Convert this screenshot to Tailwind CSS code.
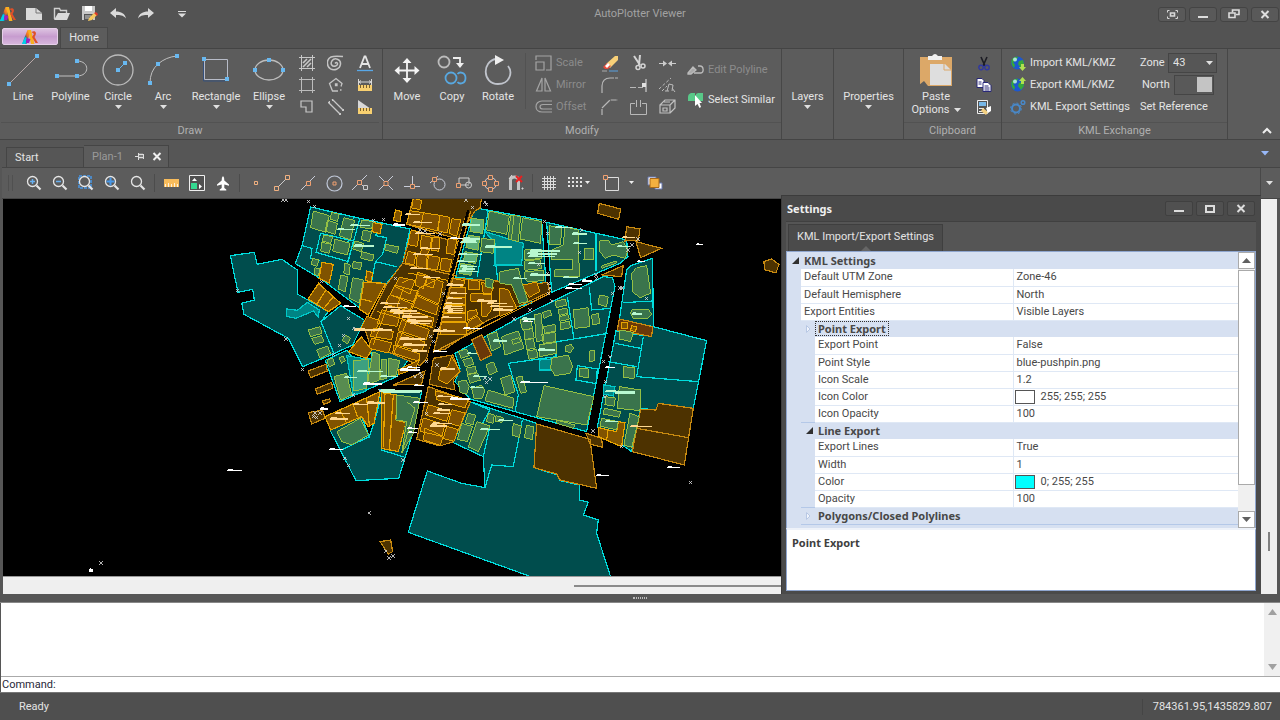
<!DOCTYPE html>
<html lang="en">
<head>
  <meta charset="UTF-8">
  <meta name="viewport" content="width=device-width, initial-scale=1.0">
  <title>AutoPlotter Viewer</title>
  <script src="https://cdn.jsdelivr.net/npm/@tailwindcss/browser@4"></script>
</head>
<body class="bg-[#565656] text-[#e4e4e4] text-[11px] leading-4 font-['Roboto','Noto_Sans',sans-serif]">

<!-- shared shapes -->
<svg width="0" height="0" class="absolute">
  <defs>
    <linearGradient id="lg" x1="0" y1="1" x2="1" y2="0">
      <stop offset="0" stop-color="#00d8f0"/><stop offset=".4" stop-color="#1a5a90"/><stop offset=".6" stop-color="#f07020"/><stop offset="1" stop-color="#ffc030"/>
    </linearGradient>
    <symbol id="logo" viewBox="0 0 16 16">
      <path d="M0 15L5.500 1H9L4.500 15Z" fill="url(#lg)"/>
      <path d="M0 15L3 8l2 1-1.500 6Z" fill="#00d0e8"/>
      <path d="M6 1h3L12.500 15H9Z" fill="#f8b020"/>
      <path d="M9.500 3c4-2 6 1 3 5L16 14h-2.500L10 8l2-3Z" fill="#e05028"/>
      <path d="M4.500 9l4 1-1.500 4H4Z" fill="#a020c0"/>
    </symbol>
    <symbol id="down" viewBox="0 0 7 4"><path d="M0 0h7L3.500 4Z" fill="#e0e0e0"/></symbol>
    <symbol id="lens" viewBox="0 0 18 18">
      <circle cx="7.500" cy="7.500" r="5" fill="none" stroke="#e6e6e6" stroke-width="1.300"/><path d="M11.500 11.500l4 4" stroke="#e6e6e6" stroke-width="2.200"/>
    </symbol>
    <symbol id="globe" viewBox="0 0 16 16">
      <circle cx="7.500" cy="8" r="6.500" fill="#1c58d0"/><path d="M2 4q3-3 6-2l-2 4-3 1 2 3 -1 3Q0 9 2 4M9 6l4-1 1 4-3 4-3-4Z" fill="#38a838"/><circle cx="5" cy="4.500" r="2" fill="#c8f0ff" opacity=".8"/>
    </symbol>
  </defs>
</svg>

<div class="flex flex-col h-screen min-h-[600px] overflow-hidden">

  <!-- title bar -->
  <header class="flex items-center h-7 shrink-0 bg-[#535353] relative">
    <svg class="w-4 h-5 ml-0"><use href="#logo" width="16" height="20"/></svg>
    <div class="flex ml-1 [&>button]:w-7 [&>button]:h-6 [&>button]:grid [&>button]:place-items-center">
      <button aria-label="New"><svg width="18" height="16"><path d="M1 2h10l6 5v7H1Z" fill="#dadada"/><path d="M11 2v5h6" fill="none" stroke="#777"/></svg></button>
      <button aria-label="Open"><svg width="18" height="16"><path d="M1.500 13V2.500h5l1 2h6v3" fill="none" stroke="#d0d0d0" stroke-width="1.400"/><path d="M1 14l4-7h12l-3 7Z" fill="#dadada"/></svg></button>
      <button aria-label="Save"><svg width="18" height="18"><path d="M1 1h13v14H1Z" fill="#c8c8c8"/><path d="M4 1h7v5H4Z" fill="#fff"/><path d="M3 9h9v6H3Z" fill="#555"/><path d="M4 11h6M4 13h4" stroke="#ccc"/><path d="M8 13l5-5 3 2-5 5-4 1Z" fill="#f5c860"/><path d="M13 8l2-1 2 2-1 2Z" fill="#e03a28"/></svg></button>
      <button aria-label="Undo"><svg width="18" height="14"><path d="M1 6l6-5v3.500c5 0 9 2 10 7-3-3.500-6-3.500-10-3.500V11Z" fill="#dadada"/></svg></button>
      <button aria-label="Redo"><svg width="18" height="14"><path d="M17 6l-6-5v3.500c-5 0-9 2-10 7 3-3.500 6-3.500 10-3.500V11Z" fill="#dadada"/></svg></button>
    </div>
    <button aria-label="Customize" class="ml-[10px] w-6 grid place-items-center"><svg width="8" height="7"><path d="M0 .5h8" stroke="#ddd"/><path d="M0 2.500h8L4 6.500Z" fill="#ddd"/></svg></button>
    <h1 class="absolute inset-x-0 text-center pointer-events-none text-[#a2a2a2]">AutoPlotter Viewer</h1>
    <div class="ml-auto mr-px flex gap-[3px] [&>button]:w-7 [&>button]:h-[15px] [&>button]:rounded-[3px] [&>button]:border [&>button]:border-[#444] [&>button]:bg-[#595959] [&>button]:grid [&>button]:place-items-center">
      <button aria-label="Full screen"><svg width="11" height="9" fill="none" stroke="#d8d8d8"><path d="M.5 2.500v-2h2M8.500 .5h2v2M10.500 6.500v2h-2M2.500 8.500h-2v-2"/><path d="M3.500 3h4v3h-4Z" stroke-width="1.600"/></svg></button>
      <button aria-label="Minimize"><svg width="10" height="9"><path d="M0 7h10" stroke="#ddd" stroke-width="2"/></svg></button>
      <button aria-label="Restore"><svg width="12" height="10" fill="none" stroke="#ddd" stroke-width="1.600"><path d="M4.500 3.500V1H11v4.500H8"/><path d="M1 4h6v4.500H1Z"/></svg></button>
      <button aria-label="Close"><svg width="10" height="9"><path d="M1.500 1l7 7M8.500 1l-7 7" stroke="#ddd" stroke-width="2"/></svg></button>
    </div>
  </header>

  <!-- ribbon tabs -->
  <nav class="flex items-end h-5 shrink-0 bg-[#535353]">
    <button aria-label="Application menu" class="ml-[2px] mb-[3px] w-14 h-[17px] rounded-[2px] border border-[#e6cfe9] bg-linear-to-b from-[#dcc2e0] via-[#c79ccf] to-[#d6b6dc] grid place-items-center"><svg width="18" height="16"><use href="#logo" width="18" height="16"/></svg></button>
    <button class="ml-[2px] h-[21px] w-12 z-10 bg-[#5c5c5c] border border-b-0 border-[#484848]">Home</button>
  </nav>

  <!-- ribbon -->
  <section class="flex shrink-0 bg-[#5c5c5c] border-y border-[#444] [&>div]:border-r [&>div]:border-[#474747] [&>div]:shrink-0 [&_h2]:text-center [&_h2]:text-[#b0b0b0] [&_h2]:border-t [&_h2]:border-[#525252]">
    <div class="flex flex-col pl-px pr-[3px]">
      <div class="flex h-[73px] [&>button]:flex [&>button]:flex-col [&>button]:items-center [&>button]:pt-1">
        <button class="w-[44px]"><svg width="34" height="36"><path d="M3 31L31 3" stroke="#b8a8a8"/><path d="M1 29h4v4h-4ZM29 1h4v4h-4Z" fill="#68b8f0"/></svg>Line</button>
        <button class="w-[51px]"><svg width="34" height="36"><path d="M3 23h20M23 8c13 0 13 15 0 15" fill="none" stroke="#c0c0c0"/><path d="M1 21h4v4h-4ZM21 21h4v4h-4ZM21 6h4v4h-4Z" fill="#68b8f0"/></svg>Polyline</button>
        <button class="w-[44px]"><svg width="34" height="36"><circle cx="17" cy="17" r="15" fill="none" stroke="#bcbcbc" stroke-width="1.300"/><path d="M17 17l7-7" stroke="#68b8f0"/><path d="M15 15h4v4h-4ZM22 8h4v4h-4Z" fill="#68b8f0"/></svg>Circle<svg width="7" height="4"><use href="#down"/></svg></button>
        <button class="w-[46px]"><svg width="34" height="36"><path d="M4 30Q4 18 12 11T31 3" fill="none" stroke="#c0c0c0"/><path d="M2 28h4v4h-4ZM10 9h4v4h-4ZM29 1h4v4h-4Z" fill="#68b8f0"/></svg>Arc<svg width="7" height="4"><use href="#down"/></svg></button>
        <button class="w-[60px]"><svg width="34" height="36"><path d="M5.500 6.500h23v20h-23Z" fill="none" stroke="#b8bcc8"/><path d="M4.500 9v19h22" fill="none" stroke="#34507c"/><path d="M3 4h4v4h-4ZM26 24h4v4h-4Z" fill="#68b8f0"/></svg>Rectangle<svg width="7" height="4"><use href="#down"/></svg></button>
        <button class="w-[46px]"><svg width="34" height="36"><ellipse cx="17" cy="17" rx="14" ry="10" fill="none" stroke="#bcbcbc" stroke-width="1.300"/><path d="M15 5h4v4h-4ZM1 15h4v4h-4ZM29 15h4v4h-4Z" fill="#68b8f0"/></svg>Ellipse<svg width="7" height="4"><use href="#down"/></svg></button>
        <div class="grid grid-cols-[29px_29px_29px] auto-rows-[22px] content-start pt-[3px] [&>button]:grid [&>button]:place-items-center">
          <button aria-label="Hatch"><svg width="16" height="16" fill="none" stroke="#c8c8c8"><path d="M0 2.500h16M0 13.500h16M2.500 0v16M13.500 0v16"/><path d="M4 8l4-4M4 12l8-8M8 12l4-4" stroke-width="1.600"/></svg></button>
          <button aria-label="Spiral"><svg width="17" height="16" fill="none" stroke="#c4c4c4" stroke-width="1.500"><path d="M8 8.500c2-2.500 4 1 1 2.300-4 1.600-6-2-4-5 2.500-3.500 9-2 8.500 3.500-.5 5-6.500 6.500-10 4.500C-1 11-.5 4 4 2c3-1.400 7-1 12-.5"/></svg></button>
          <button aria-label="Text"><svg width="16" height="17"><path d="M3 13L7.500 1.500h1L13 13M5 9h6" fill="none" stroke="#e4e4e4" stroke-width="1.800"/><path d="M0 15.500h16" stroke="#58a8e8" stroke-width="1.300"/></svg></button>
          <button aria-label="Boundary"><svg width="16" height="16" fill="none" stroke="#bcbcbc"><path d="M0 2.500h16M0 13.500h16M2.500 0v16M13.500 0v16"/></svg></button>
          <button aria-label="Polygon"><svg width="16" height="16" fill="none" stroke="#c4c4c4" stroke-width="1.300"><path d="M10 14H4.500L1.500 6.500 8 1.500l6 5-1 3"/><path d="M7.500 7h1.500v1.500h-1.500ZM12 13h1.500"/></svg></button>
          <button aria-label="Dimension"><svg width="14" height="12"><path d="M.5 0v6M13.500 0v6M1 3h12M3 1.500L1 3l2 1.500M11 1.500L13 3l-2 1.500" fill="none" stroke="#d8d8d8"/><path d="M0 6h14v6H0Z" fill="#f8d070"/><path d="M2.500 6v3M5.500 6v3M8.500 6v3M11.500 6v3" stroke="#7a6030"/></svg></button>
          <button aria-label="Region"><svg width="14" height="14" fill="none" stroke="#c8c8c8" stroke-width="1.200"><path d="M1 1h11v11H6V7H1Z"/></svg></button>
          <button aria-label="Double line"><svg width="16" height="16" stroke="#c8c8c8" stroke-width="1.300"><path d="M4 0l11 11M0 3l12 12" /><path d="M1 3h1M14 11h2M11 15h2M4 1h1" stroke-width="2"/></svg></button>
          <button aria-label="Area"><svg width="14" height="14"><path d="M0 0l13 9H0Z" fill="#d8d8d8"/><path d="M0 8h14v6H0Z" fill="#f8d070"/><path d="M2.500 8v3M5.500 8v3M8.500 8v3M11.500 8v3" stroke="#7a6030"/></svg></button>
        </div>
      </div>
      <h2>Draw</h2>
    </div>

    <div class="w-[399px] flex flex-col">
      <div class="flex h-[73px]">
        <div class="flex [&>button]:flex [&>button]:flex-col [&>button]:items-center [&>button]:pt-1">
          <button class="w-[48px]"><svg width="34" height="36" fill="#f4f4f4"><path d="M17 5l4.500 5h-9ZM17 30l4.500-5h-9ZM4.500 17.500l5-4.500v9ZM29.500 17.500l-5-4.500v9Z"/><path d="M17 8v19M7 17.500h20" stroke="#f4f4f4" stroke-width="1.800"/></svg>Move</button>
          <button class="w-[42px]"><svg width="34" height="36" fill="none" stroke-width="1.800"><circle cx="9" cy="9" r="5.500" stroke="#bcbcbc"/><path d="M18 5h7v6" stroke="#eee"/><path d="M21 10h8l-4 5Z" fill="#eee"/><circle cx="16" cy="25" r="5.500" stroke="#58a8e0"/><path d="M22.500 21c2-2.500 8-2 8 4s-6 6.500-8 4" stroke="#58a8e0"/></svg>Copy</button>
          <button class="w-[50px]"><svg width="34" height="36" fill="none"><path d="M15 6C1 8 1 31 17 31c12 0 15-12 10-18" stroke="#c0c4cc" stroke-width="1.800"/><path d="M14 2l9 5-9 5Z" fill="#eee"/></svg>Rotate</button>
        </div>
        <div class="border-l border-[#525252] ml-[2px] mt-1 h-14"></div>
        <div class="w-[69px] pl-[9px] pt-[3px] text-[#8c8c8c] [&>button]:flex [&>button]:items-center [&>button]:gap-1 [&>button]:h-[22px]">
          <button disabled><svg width="17" height="16" fill="none" stroke="#a4a4a4" stroke-width="1.200"><path d="M1 5V1h15v14h-5"/><path d="M1 7h8v8H1Z"/></svg>Scale</button>
          <button disabled><svg width="17" height="16" fill="none" stroke="#a4a4a4" stroke-width="1.200"><path d="M7 1v13H1.500ZM10 1v13h5.500Z"/></svg>Mirror</button>
          <button disabled><svg width="17" height="14" fill="none" stroke="#a4a4a4" stroke-width="1.200"><path d="M17 1H7C-1 1-1 12 7 12H17M17 4.500H8c-4 0-4 4.500 0 4.500h9"/></svg>Offset</button>
        </div>
        <div class="grid grid-cols-[29px_29px_29px] auto-rows-[22px] content-start pt-[3px] [&>button]:grid [&>button]:place-items-center">
          <button aria-label="Erase"><svg width="18" height="17"><path d="M5 9l9-8h3v4L9 13Z" fill="#f8d078"/><path d="M2 12l4-4 4 3-3 3H4Z" fill="#e84838"/><path d="M4 11l3-3 2 2-3 3Z" fill="#fff"/><path d="M1 16h5" stroke="#aaa"/><path d="M8 16h9" stroke="#58a0e0"/></svg></button>
          <button aria-label="Trim"><svg width="14" height="16" fill="none" stroke="#d4d4d4"><path d="M2 1l6 9M8 0L7 10" stroke-width="2"/><circle cx="6" cy="12.500" r="2" stroke-width="1.500"/><circle cx="11" cy="11" r="2" stroke-width="1.500"/></svg></button>
          <button aria-label="Join"><svg width="17" height="9"><path d="M0 4.500h7M10 4.500h7" stroke="#ccc"/><path d="M4 1.500l4 3-4 3ZM13 1.500l-4 3 4 3Z" fill="#ccc"/></svg></button>
          <button aria-label="Fillet"><svg width="17" height="16" fill="none" stroke="#b8b8b8" stroke-width="1.200"><path d="M1 16V9C1 4 4 1 9 1" /><path d="M9 1h8" stroke-dasharray="4 1"/></svg></button>
          <button aria-label="Extend"><svg width="17" height="13"><path d="M0 8.500h6M8 8.500h5" stroke="#b8b8b8"/><path d="M16 0v13" stroke="#b8b8b8" stroke-width="1.500"/><path d="M12 4h4v4h-4Z" fill="#e0e0e0"/></svg></button>
          <button aria-label="Stretch"><svg width="17" height="16" fill="none" stroke="#bcbcbc"><path d="M0 12L12 1M3 14L8 9" stroke-dasharray="3 2"/><path d="M8 14l2-7 4 1-1 6M16 15l-3-4M6 14h4"/></svg></button>
          <button aria-label="Chamfer"><svg width="17" height="16" fill="none" stroke="#b8b8b8" stroke-width="1.200"><path d="M1 16V9l8-8h8" stroke-dasharray="6 1 11 1"/></svg></button>
          <button aria-label="Break"><svg width="17" height="16" fill="none" stroke="#b8b8b8"><path d="M5 4.500H.5v11h16v-11H12M6.500 1v7M10.500 1v7"/></svg></button>
          <button aria-label="Explode"><svg width="17" height="16" fill="none" stroke="#c0c0c0" stroke-width="1.200"><path d="M1 6h10v8H1ZM1 6l5-5h10v8l-5 5M16 1l-5 5M4 9h4v3H4ZM5 3h6"/></svg></button>
        </div>
        <div class="pl-[5px] pt-[13px] flex flex-col gap-[14px] [&>button]:flex [&>button]:items-center [&>button]:gap-1 [&>button]:h-4 [&>button]:whitespace-nowrap">
          <button disabled class="text-[#8c8c8c]"><svg width="17" height="12" fill="none" stroke="#bcbcbc" stroke-width="1.300"><path d="M7 9h7c3 0 3-7-1-7h-2"/><path d="M1 9l5-6 3 3-5 4H1Z" fill="#aaa"/></svg>Edit Polyline</button>
          <button><svg width="17" height="16"><path d="M1 5q0-3 3-4h4v8H1ZM9 2l2-1h5v8H9Z" fill="#58c888"/><path d="M8 3v11l2.500-2 2 4 1.500-1-1.500-4H15Z" fill="#fff"/></svg>Select Similar</button>
        </div>
      </div>
      <h2>Modify</h2>
    </div>

    <div class="w-[52px] flex flex-col">
      <button class="flex flex-col items-center pt-10">Layers<svg width="7" height="4"><use href="#down"/></svg></button>
    </div>
    <div class="w-[70px] flex flex-col">
      <button class="flex flex-col items-center pt-10">Properties<svg width="7" height="4"><use href="#down"/></svg></button>
    </div>

    <div class="w-[98px] flex flex-col">
      <div class="flex h-[73px]">
        <button class="w-[64px] pt-1 flex flex-col items-center leading-[13px]">
          <svg width="34" height="37"><path d="M1 4h32v29H1Z" fill="#dca868"/><path d="M9 7V3h4q3-4 6 0h4v4Z" fill="#f0f0f0"/><path d="M11 11h15l6 6v15H11Z" fill="#dedede"/><path d="M25 11v6h7" fill="none" stroke="#dca868"/><path d="M0 32l5-4 4 5H0Z" fill="#5c5c5c"/></svg>
          Paste<span class="flex items-center gap-1">Options <svg width="7" height="4"><use href="#down"/></svg></span>
        </button>
        <div class="grid auto-rows-[22px] w-[31px] content-start pt-[3px] [&>button]:grid [&>button]:place-items-center">
          <button aria-label="Cut"><svg width="12" height="15" fill="none"><path d="M3 1l4 9M9 1L5 10" stroke="#1c1c24" stroke-width="1.600"/><circle cx="3" cy="11.500" r="2.200" stroke="#3038a0" stroke-width="1.400"/><circle cx="9" cy="11.500" r="2.200" stroke="#3038a0" stroke-width="1.400"/></svg></button>
          <button aria-label="Copy clip"><svg width="16" height="14" stroke="#282878"><path d="M1 .5h5l2 2v7H1Z" fill="#fff"/><path d="M7 4.500h5l3 3v6H7Z" fill="#fff"/><path d="M2.500 4h3M2.500 6h3M8.500 8h4M8.500 10h5M8.500 12h5"/></svg></button>
          <button aria-label="Paste special"><svg width="16" height="16"><path d="M1.500 1.500h10v13h-10Z" fill="#555" stroke="#eee"/><path d="M3 3h7v4H3Z" fill="#78b8e8"/><path d="M3 9.500h5M3 12.500h3" stroke="#eee"/><path d="M7 9l5 4-2 3-5-4Z" fill="#f4d080"/><path d="M10 9l5-2v5l-3 2Z" fill="#fff"/></svg></button>
        </div>
      </div>
      <h2>Clipboard</h2>
    </div>

    <div class="w-[226px] flex flex-col">
      <div class="flex h-[73px] pt-[3px] pl-2">
        <div class="w-[130px] [&>button]:flex [&>button]:items-center [&>button]:gap-1 [&>button]:h-[22px] [&>button]:whitespace-nowrap">
          <button><svg width="16" height="16"><use href="#globe"/><path d="M11 9h3v3h2l-3.500 4L9 12h2Z" fill="#b0e050"/></svg>Import KML/KMZ</button>
          <button><svg width="16" height="16"><use href="#globe"/><path d="M11 7V4H9l3.500-4L16 4h-2v3Z" fill="#b0e050"/></svg>Export KML/KMZ</button>
          <button><svg width="16" height="16" fill="none" stroke="#4888c8"><circle cx="6" cy="9.500" r="4" stroke-width="2"/><circle cx="6" cy="9.500" r="5.500" stroke-dasharray="2 2.300"/><circle cx="13" cy="3.500" r="1.800" stroke-width="1.500"/></svg>KML Export Settings</button>
        </div>
        <div>
          <div class="flex items-center justify-between w-[77px] h-[22px]">
            <label for="zone">Zone</label>
            <div class="relative flex items-center">
              <select id="zone" class="appearance-none w-[49px] h-[20px] pl-1 bg-[#565656] border border-[#454545]"><option>43</option></select>
              <svg width="7" height="4" class="absolute right-1 pointer-events-none"><use href="#down"/></svg>
            </div>
          </div>
          <div class="flex items-center justify-between w-[74px] h-[22px] pl-[2px]">
            <label for="north">North</label>
            <span class="relative flex">
              <input id="north" type="checkbox" role="switch" checked class="appearance-none w-[40px] h-[20px] bg-[#595959] border border-[#454545]">
              <span class="absolute right-[2px] top-[2px] w-[15px] h-[15px] bg-[#c4c4c4] pointer-events-none"></span>
            </span>
          </div>
          <button class="h-[22px]">Set Reference</button>
        </div>
      </div>
      <h2>KML Exchange</h2>
    </div>
    <button aria-label="Collapse ribbon" class="ml-auto self-end mr-2 mb-1"><svg width="10" height="9"><path d="M1 7l4-4 4 4" fill="none" stroke="#eee" stroke-width="2"/></svg></button>
  </section>

  <!-- document tabs -->
  <nav class="flex items-end h-[27px] shrink-0 pl-[6px] pr-[11px]">
    <button class="w-[78px] h-[20px] pl-2 text-left border border-b-0 border-[#454545]">Start</button>
    <div class="flex items-center w-[85px] h-[22px] pl-2 border border-l-0 border-b-0 border-[#454545] bg-[#5c5c5c] text-[#9a9a9a]">
      <button class="w-[43px] text-left">Plan-1</button>
      <button aria-label="Pin" class="mr-2"><svg width="9" height="7"><path d="M0 3.500h3M3.500 0v7M8.500 1v5" stroke="#ddd"/><path d="M4 1.500h4M4 4.500h4" stroke="#ddd" stroke-width="1.500"/></svg></button>
      <button aria-label="Close tab"><svg width="10" height="9"><path d="M1.500 1l7 7M8.500 1l-7 7" stroke="#eee" stroke-width="2"/></svg></button>
    </div>
    <button aria-label="Documents" class="ml-auto self-center h-4"><svg width="8" height="5"><path d="M0 0h8L4 4.500Z" fill="#98b8f8"/></svg></button>
  </nav>

  <!-- view and snap toolbar -->
  <div class="flex items-center h-8 shrink-0 ml-[2px] pl-[6px] border-y border-[#454545] bg-[#5c5c5c] [&>button]:w-[26px] [&>button]:h-6 [&>button]:shrink-0 [&>button]:grid [&>button]:place-items-center [&>hr]:w-px [&>hr]:h-[18px] [&>hr]:border-0 [&>hr]:bg-[#4c4c4c] [&>hr]:mx-[3px]">
    <span class="w-[5px] h-4 mr-2 border-x border-[#505050]"></span>
    <button aria-label="Zoom in"><svg width="18" height="18"><use href="#lens"/><path d="M5 7.500h5M7.500 5v5" stroke="#68b0f0" stroke-width="1.500"/></svg></button>
    <button aria-label="Zoom out"><svg width="18" height="18"><use href="#lens"/><path d="M5 7.500h5" stroke="#68b0f0" stroke-width="1.500"/></svg></button>
    <button aria-label="Zoom window"><svg width="18" height="18"><path d="M2 2h12v12H2Z" fill="none" stroke="#4898e8" stroke-width="1.500" stroke-dasharray="3 1"/><use href="#lens"/></svg></button>
    <button aria-label="Zoom extents"><svg width="18" height="18"><use href="#lens"/><path d="M3.500 7.500h8M7.500 3.500v8" stroke="#4898e8" stroke-width="2"/></svg></button>
    <button aria-label="Zoom"><svg width="18" height="18"><use href="#lens"/></svg></button>
    <hr>
    <button aria-label="Measure"><svg width="15" height="8"><path d="M0 0h15v8H0Z" fill="#f8bc5c"/><path d="M1.500 8V5M4.500 8V4M7.500 8V5M10.500 8V4M13.500 8V5" stroke="#fff0d8"/></svg></button>
    <button aria-label="Layout"><svg width="16" height="16"><path d="M.5.5h15v15H.5Z" fill="#505050" stroke="#f0f0f0"/><path d="M2 8h6v6H2Z" fill="#34d890"/><path d="M3 6l2.500-3L8 6ZM10 9l3 2.500-3 2.500Z" fill="#fff"/></svg></button>
    <button aria-label="Fly"><svg width="14" height="15"><path d="M7 0q1.500 1 1.300 4.500L13 8.500v1.300L8.300 8.500V12l2 1.500v1H3.700v-1L5.700 12V8.500L1 9.800V8.500l4.700-4Q5.500 1 7 0Z" fill="#fff"/></svg></button>
    <hr>
    <button aria-label="Node"><svg width="16" height="16"><path d="M6.500 6.500h3v3h-3Z" fill="none" stroke="#f0b080"/></svg></button>
    <button aria-label="Endpoint"><svg width="16" height="16" fill="none"><path d="M4 12l8-8" stroke="#ccc"/><path d="M.5 11.500h4v4h-4ZM11.500.5h4v4h-4Z" stroke="#f0b080"/></svg></button>
    <button aria-label="Midpoint"><svg width="16" height="16" fill="none"><path d="M1 15L15 1" stroke="#c8ccd8"/><path d="M6.500 6.500h4v4h-4Z" stroke="#f0a070" fill="#5c5c5c"/></svg></button>
    <button aria-label="Center"><svg width="17" height="17" fill="none"><circle cx="8.500" cy="8.500" r="7.500" stroke="#c0c8d8" stroke-width="1.200"/><path d="M7 7h3v3H7Z" stroke="#f0a070"/></svg></button>
    <button aria-label="Nearest"><svg width="16" height="16" fill="none"><path d="M0 15L15 0M8 8l4 4" stroke="#c8ccd8"/><path d="M5.500 5.500h4v4h-4Z" stroke="#f0a070" fill="#5c5c5c"/><path d="M11.500 10.500h4v4h-4Z" stroke="#ccc"/></svg></button>
    <button aria-label="Intersection"><svg width="16" height="16" fill="none"><path d="M1 15L15 1M1 1l14 14" stroke="#c8ccd8"/><path d="M6 6.500h4v4H6Z" stroke="#f0a070" fill="#5c5c5c"/></svg></button>
    <button aria-label="Perpendicular"><svg width="16" height="16" fill="none"><path d="M0 11.500h16M8.500 1v9" stroke="#c8ccd8"/><path d="M6.500 9.500h4v4h-4Z" stroke="#f0a070" fill="#5c5c5c"/></svg></button>
    <button aria-label="Tangent"><svg width="16" height="16" fill="none"><circle cx="9.500" cy="9.500" r="5.500" stroke="#c8ccd8"/><path d="M0 8l8-7" stroke="#c8ccd8"/><path d="M2.500 2.500h4v4h-4Z" stroke="#f0a070" fill="#5c5c5c"/></svg></button>
    <button aria-label="Insertion"><svg width="16" height="14" fill="none"><path d="M3 7V2h10v6" stroke="#ccc"/><path d="M5 9h8" stroke="#ccc"/><circle cx="12.500" cy="9" r="3" stroke="#ccc"/><path d="M.5 7.500h4v4h-4Z" stroke="#f0a070" fill="#5c5c5c"/></svg></button>
    <button aria-label="Quadrant"><svg width="17" height="17" fill="none"><circle cx="8.500" cy="8.500" r="6" stroke="#c8ccd8"/><path d="M6.500 .5h4v4h-4ZM6.500 12.500h4v4h-4ZM.5 6.500h4v4h-4ZM12.500 6.500h4v4h-4Z" stroke="#f0a070" fill="#5c5c5c"/></svg></button>
    <button aria-label="Snap off"><svg width="16" height="16" fill="none"><path d="M2.500 15V5q0-3 4-3t4 3v10" stroke="#c4c4c4" stroke-width="3"/><path d="M4 0l-3 4M14 13h1v1h-1Z" stroke="#ddd"/><path d="M8 1l6 6M14 1L8 7" stroke="#e82020" stroke-width="2"/></svg></button>
    <hr>
    <button aria-label="Grid"><svg width="16" height="16" stroke="#dcdcdc"><path d="M3.500 1v14M6.500 1v14M9.500 1v14M12.500 1v14M1 3.500h14M1 6.500h14M1 9.500h14M1 12.500h14"/></svg></button>
    <button aria-label="Grid snap"><svg width="14" height="14" stroke="#e4e4e4" stroke-width="2" stroke-dasharray="2 2"><path d="M0 2h14M0 6h14M0 10h14"/></svg></button>
    <svg width="5" height="4" class="ml-[-3px] mr-2"><path d="M0 0h5L2.500 3Z" fill="#eee"/></svg>
    <button aria-label="Select mode"><svg width="17" height="17" fill="none"><path d="M2.500 2.500h13v13h-13Z" stroke="#ddd"/><path d="M.5.5h4v4h-4Z" stroke="#f0a070" fill="#5c5c5c"/></svg></button>
    <svg width="5" height="4" class="ml-[5px] mr-2"><path d="M0 0h5L2.500 3Z" fill="#eee"/></svg>
    <button aria-label="Draw order"><svg width="16" height="14"><path d="M1 1h8v8H1Z" fill="#fff" stroke="#6878b0"/><path d="M8 7h7v6H8Z" fill="#fff" stroke="#6878b0"/><path d="M3 2.500h9v9H3Z" fill="#f4b040" stroke="#a86818"/></svg></button>
    <button aria-label="Toolbar options" class="ml-auto mr-[2px] border-l border-[#484848] !w-[18px] !h-full"><svg width="7" height="4"><use href="#down"/></svg></button>
  </div>

  <!-- drawing area -->
  <main class="relative flex flex-1 min-h-0 ml-[3px] mr-[3px]">
    <div class="flex flex-col flex-1 min-w-0">
      <svg id="plan" class="flex-1 w-full min-h-0 bg-black" shape-rendering="crispEdges">
        <g transform="translate(217 -4) scale(.3333)" stroke-width="3.600" fill="none">
          <!-- cyan parcels -->
          <g fill="#004d4d" stroke="#00dede">
            <path d="M31 182L103 172 112 208 186 193 232 225V297L325 350 303 380 345 475 248 515 205 430 72 358 65 325 103 315 98 283 54 292Z"/>
            <path d="M303 380L362 332 434 376 398 450 342 476Z"/>
            <path d="M272 36L402 66 570 102 548 205 500 265 432 262 418 338 300 250 226 206 246 152Z"/>
            <path d="M246 152L276 160 272 190 300 196M302 115L400 138 385 200 288 172ZM420 70L382 205M484 86L466 122 500 128 488 178 466 200 530 215M466 200L455 258M432 262L420 330M400 68L384 140" fill="none"/>
            <path d="M316 496L380 466 400 490 455 490 450 450 568 490 530 545 360 620Z"/>
            <g transform="translate(660 0)">
              <path d="M103 38L305 75 318 262 262 270 275 325 232 335 205 272 170 270 160 260 47 246Z"/>
              <path d="M320 82L560 135 564 185 540 205 335 292Z"/>
              <path d="M45 475L230 372 490 245 518 248 525 275 440 710 225 650 90 612 45 560 60 520Z"/>
              <path d="M638 190L572 212 560 225 538 375 640 395Z"/>
              <path d="M528 408L610 422 640 395 800 437 760 640 655 625 648 645 602 640 575 770 472 697Z"/>
              <path d="M468 115V228M145 45L112 245M160 212H250M168 212L175 270M190 245L215 300M382 305L402 432 505 415M402 432L350 440 348 485 205 505 235 600 225 650M448 275L455 345 512 340M412 512L472 522 468 566 408 555ZM548 323L640 318M610 425L590 545 775 560M525 445L602 460M505 500L590 515" fill="none"/>
            </g>
            <g transform="translate(0 525)">
              <path d="M330 180L425 140 448 200 470 130 480 60 605 65 575 200 536 325 408 332Z"/>
              <path d="M365 240L448 200 462 160 484 80 484 240 555 262" fill="none"/>
            </g>
            <g transform="translate(660 525)">
              <path d="M-38 303L65 340 135 353 130 260 40 218 90 95 290 160 282 293 352 315 360 332 418 345V390L445 397 430 435 475 450 470 490 515 630H300L-95 487Z"/>
              <path d="M135 353L155 285 220 290 247 150M90 95L150 120 85 235M130 260L150 170" fill="none"/>
            </g>
          </g>
          <g fill="#008484" stroke="#00c8c8">
            <path d="M200 342L232 346 262 322 298 345 295 366 280 348 228 370 200 364ZM380 482L455 495 435 590 400 600Z"/>
            <path d="M795 110L910 145 905 210H825V145ZM960 495L995 492 992 525H958ZM1152 570L1185 575 1180 603 1150 597Z"/>
          </g>
          <!-- brown parcels -->
          <g fill="#4d3200" stroke="#c88a10">
            <path d="M580 8H785L780 40 765 48 712 132 560 88Z"/>
            <path d="M575 105L715 142 694 230 680 300 620 490 600 512 515 475 450 450 434 400 500 268 548 205Z"/>
            <path d="M700 250L830 258 925 270 982 262 990 290 800 378 676 462 640 470Z"/>
            <path d="M640 490L698 480 720 530 700 555 705 585 628 568Z"/>
            <path d="M264 528L318 508 322 528 272 548ZM286 582L335 562 338 580 292 598ZM265 653L308 645 315 670 275 687ZM307 618L329 612 332 620 312 628ZM480 1040L512 1035 518 1070 505 1077Z"/>
            <path d="M625 575L752 620 700 740 660 753 590 733Z"/>
            <path d="M520 570L615 528 605 568Z"/>
            <path d="M1138 25L1202 42 1196 73 1133 55ZM1220 95L1260 102 1255 135 1215 138ZM1248 140L1325 160 1262 188ZM1145 240L1210 212 1205 245Z"/>
            <path d="M755 435L785 420 815 480 782 497ZM1198 372L1298 395 1295 425 1192 405Z" fill="#6a3808"/>
            <path d="M950 687L1110 733 1130 880 1020 855 1010 837 942 818ZM1098 715L1145 730 1148 757 1110 747Z"/>
            <path d="M1262 643L1308 645 1315 625 1420 640 1393 810 1237 770ZM1250 700L1405 728"/>
            <path d="M1632 200L1655 192 1677 208 1668 234 1634 224Z"/>
          </g>
          <!-- old town plots -->
          <g transform="translate(360 9)" fill="#805000" stroke="#e8a400" stroke-width="3">
            <path d="M220 0L245 8 240 35 215 30ZM210 38L300 52 292 98 200 78ZM250 45L242 88M300 52L330 58 322 105 294 98ZM335 62L362 66 350 115 328 106Z"/>
            <path d="M212 98L238 100 232 145 204 140ZM245 112L275 118 270 155 240 148ZM278 118L300 120 296 160 273 156ZM325 120L350 126 342 170 318 165ZM205 160L228 165 222 200 195 195ZM232 168L262 172 258 212 228 205ZM265 172L300 178 292 215 262 212ZM305 180L335 185 328 222 300 215ZM246 150L268 156 262 172 240 168Z"/>
            <path d="M178 238L225 247 210 288 165 265ZM165 262L235 280 222 312 150 290ZM232 222L262 232 250 272 225 262ZM262 240L285 246 280 270 256 262ZM290 245L310 252 296 318 228 288 238 270ZM150 290L218 318 208 340 135 318ZM228 292L295 322 288 350 215 325ZM125 335L180 350 172 385 112 375ZM195 330L282 360 275 388 188 355ZM185 365L268 395 258 425 175 398ZM100 390L160 400 155 425 90 415ZM175 402L255 432 245 462 165 440ZM95 420L155 435 145 465 85 450ZM162 442L240 468 236 490 158 465ZM80 355L120 368 105 400 62 392Z"/>
            <path d="M205 245L185 255M110 340L280 390M190 270L170 330M235 285L160 470M205 225L330 248M140 330L100 440" fill="none"/>
            <path d="M330 240L375 248 370 265 322 260ZM322 268L378 270V300L315 296ZM315 300H378V320H312ZM312 322H378V345H308ZM308 348H378V370H304ZM304 374H380V410H300ZM385 245L420 250 418 275H385ZM425 252L462 268 450 290H430ZM392 288H455V335L440 355H425V310H392ZM385 370L412 355 428 375 380 400ZM382 340L410 335 412 350 382 368ZM480 270L505 275 530 330 505 345 480 355ZM545 262L590 252 600 280 568 298Z"/>
            <path d="M335 475L360 520 320 558 295 545 300 520 325 505Z"/>
            <path d="M285 578L385 605 375 630 290 605ZM265 620L330 640 320 670 255 650ZM335 635L375 645 360 685 325 675ZM250 660L315 680 305 715 240 700ZM320 685L355 695 342 730 310 722ZM255 690L310 715 300 742 250 725Z"/>
            <path d="M175 515L240 485 225 512 175 530Z"/>
          </g>
          <g fill="#805300" stroke="#e8a400">
            <path d="M306 202L340 208 328 264 297 250ZM296 265L362 325 325 350 264 312ZM318 285L290 328M340 305L310 342M458 82L486 88 480 116 456 110ZM527 45L545 50 540 80 520 76ZM440 228L458 233 453 261 437 256ZM432 262L497 265 445 360 418 342ZM424 312L455 320M424 425L455 465 440 490 386 470Z"/>
            <path d="M1205 383H1222V400H1205ZM1235 392L1250 396 1246 410 1232 406Z"/>
            <path d="M315 665L480 590 462 685 445 695 425 665 332 705ZM360 645L378 680M400 630L412 665M440 610L448 690"/>
            <path d="M485 593L530 600 528 675 558 683 535 770 484 760ZM495 595L490 755M520 600L508 765"/>
            <path d="M1135 697L1165 705 1190 710 1195 680 1215 683 1205 755 1135 725ZM1165 700L1160 735"/>
          </g>
          <!-- buildings -->
          <g fill="#3a744c" stroke="#94c044" stroke-width="3">
            <path d="M280 48L328 62 318 112 272 98ZM335 52L358 58 352 80 330 72ZM322 75L352 85 345 118 316 108ZM372 68L404 76 392 135 358 122ZM312 120L338 125 332 145 306 138ZM306 142L334 148 328 175 302 168ZM345 132L390 145 382 180 338 168ZM425 75L460 80 455 102 420 97ZM430 105L455 110 448 140 424 134ZM405 138L430 145 424 170 398 162ZM425 170L462 180 458 198 422 190ZM498 148L536 156 532 175 494 165ZM375 205L391 209 387 239 371 235ZM400 200L425 203 422 224 396 218ZM362 240L384 245 375 290 355 282ZM398 248L430 255 418 325 388 310ZM278 190L296 195 292 214 274 208ZM285 218L299 222 295 244 283 238ZM265 405L300 395 306 415 272 425ZM275 430L305 422 312 440 285 448ZM290 465L322 453 332 475 300 490ZM366 435L378 420 392 430 382 446ZM320 497L338 489 344 507 328 515ZM358 488L370 483 376 497 364 505Z"/>
            <path d="M342 545L380 535 395 600 362 615ZM458 470L480 480 478 555 442 570ZM484 495L500 493V550L482 555ZM505 490L540 497 528 540 506 545Z" fill="#588c50"/>
            <path d="M400 498L447 492 440 580 402 588Z" fill="#3ca080"/>
            <path d="M350 710L420 670 445 720 395 750 365 740ZM530 600L600 610 580 715 545 775 560 680 528 675ZM560 620L585 640 548 765"/>
            <g transform="translate(660 0)">
              <path d="M148 48L208 62 200 118 140 105ZM212 60L242 65 235 140 205 132ZM222 64L214 134M248 68L305 80 302 145 240 132ZM328 92L365 98 362 148 330 150ZM375 95L415 105 418 245H345V225H398V195H335V165L370 150ZM435 160L462 162 460 195H432ZM480 138L505 136 515 150 550 140 565 165 555 190 520 180 495 190 480 170ZM485 212L530 198 528 205 485 220ZM590 218L620 212 632 295 600 308 578 290 575 235ZM575 345L625 342 635 358 622 370H580L572 355ZM478 300L505 305 500 335 475 328ZM400 345L445 338 450 395 405 400ZM455 360L475 355 480 385 458 390ZM540 405L580 412 572 440 538 432Z"/>
              <path d="M180 230L235 220 245 260 265 320 238 325 215 270 180 265ZM255 165H305V190L255 195ZM255 198L300 193 305 221 255 226ZM255 230L310 226 312 256 267 261 255 253ZM125 130L165 135 160 175 122 170ZM138 250L160 254 158 280 138 275Z"/>
              <path d="M95 70L132 75 128 115 90 110ZM85 120L120 126 114 166 78 158ZM75 170L113 176 107 206 71 198ZM62 205L100 211 94 241 58 235Z" fill="#5cae78"/>
              <path d="M185 425L235 408 252 460 195 480ZM215 435L236 428 242 440 220 448ZM142 420L170 410 182 455 155 468ZM240 375L270 370 278 400 248 405ZM283 360L303 355 311 435 289 441ZM252 405L277 401 283 429 253 434ZM255 435L280 431 286 459 261 464ZM262 468L290 463 294 487 266 493ZM308 352L330 345 335 360 312 370ZM310 395L345 388 348 408 315 415ZM305 418L345 412 348 440 310 445ZM298 450L348 442 350 475 300 485ZM345 320L375 312 381 330 349 338ZM355 345L380 339 384 355 358 361ZM358 365L384 359 388 373 360 379ZM360 384L388 378 392 398 362 404ZM375 455L393 447 401 459 391 473 376 469ZM450 468L464 465V497L450 501ZM335 490L385 480 398 515 390 535 345 542 332 520ZM420 520L445 522V548L418 545Z"/>
              <path d="M55 470L80 462 88 482 64 490ZM68 495L95 488 102 508 76 515ZM78 520L105 514 110 532 84 538ZM82 540L112 533 122 555 90 565ZM55 560L78 555 88 575 80 598 60 592ZM138 510L160 500 172 530 148 540ZM228 548L246 543 260 591 242 595ZM182 550L212 540 225 590 195 600ZM95 580L125 570 135 585 127 610H102ZM550 515L585 518 582 550 552 548Z"/>
            </g>
            <path d="M972 572L1122 605 1100 690 950 665ZM1010 675L1065 690 1060 700 1010 685ZM805 585L882 610 878 640 795 617ZM1198 575L1262 585 1260 647 1192 640ZM1158 605L1186 609 1183 634 1155 629ZM1153 640L1202 650 1198 667 1150 657ZM1145 670L1195 680 1190 705 1140 693ZM1230 655L1258 665 1235 757 1212 750ZM770 680L810 693 775 770 745 755ZM725 685L758 695 742 740 712 733ZM745 655L767 661 759 689 735 683ZM805 655L823 660 819 685 799 680ZM828 662L850 668 846 682 826 678ZM880 685L904 693 898 728 876 720ZM920 690L942 696 937 734 913 728Z"/>
          </g>
          <!-- street edges in the old town -->
          <path d="M548 205L710 243M735 70L620 500M752 48L640 470M640 472L990 295M560 88L712 132" stroke="#d09010"/>
          <path d="M745 45L625 490" stroke="#000" stroke-width="7"/>
          <g id="labels" stroke-width="4"></g>
          <g id="marks" stroke="#d8d8d8" stroke-width="2.500"></g>
        </g>
      </svg>
      <div class="h-[18px] shrink-0 bg-[#efefef] border-t border-[#999] flex items-center"><div class="ml-[571px] h-[2px] flex-1 bg-[#8a8a8a]"></div></div>
    </div>
    <div class="w-4 shrink-0 bg-[#efefef] relative"><div class="absolute right-[7px] bottom-[43px] h-[19px] w-[2px] bg-[#808080]"></div></div>

    <!-- floating settings window -->
    <section class="absolute right-4 -top-[4px] bottom-0 w-[480px] flex flex-col bg-[#4a4a4a] border-t border-l border-[#3c3c3c] pl-1 pr-[5px] pb-[3px]">
      <div class="flex items-center h-[25px] pl-px pr-px shrink-0">
        <h2 class="font-bold text-[#f0f0f0] font-['Noto_Sans']">Settings</h2>
        <div class="ml-auto flex gap-[3px] [&>button]:w-7 [&>button]:h-[15px] [&>button]:rounded-[2px] [&>button]:border [&>button]:border-[#404040] [&>button]:bg-[#505050] [&>button]:grid [&>button]:place-items-center">
          <button aria-label="Minimize settings"><svg width="10" height="9"><path d="M0 7h10" stroke="#ddd" stroke-width="2"/></svg></button>
          <button aria-label="Maximize settings"><svg width="10" height="8"><path d="M1 1h8v6H1Z" fill="none" stroke="#ddd" stroke-width="2"/></svg></button>
          <button aria-label="Close settings"><svg width="10" height="9"><path d="M1.500 1l7 7M8.500 1l-7 7" stroke="#ddd" stroke-width="2"/></svg></button>
        </div>
      </div>
      <div class="h-[30px] shrink-0 pl-[2px] pt-[2px] bg-[#555] border-t border-[#404040]">
        <button class="relative h-[27px] w-[155px] pb-[3px] bg-[#4b4b4b] border border-b-0 border-[#3f3f3f]">KML Import/Export Settings
          <svg width="10" height="5" class="absolute bottom-0 left-[72px]"><path d="M0 5L5 0l5 5Z" fill="#666"/></svg></button>
      </div>
      <div class="flex flex-1 min-h-0 bg-[#d6e0f1] text-[#484848] border-x border-t border-[#8fa6cf]">
        <table class="flex-1 self-start border-collapse table-fixed w-full [&_tr]:h-[17px] [&_td]:p-0 [&_th]:p-0 [&_td]:leading-4 [&_th]:leading-[15px] [&_th]:text-left [&_th]:font-['Noto_Sans'] [&_td]:border-b [&_td]:border-[#dfe8f5] [&_td]:bg-white [&_td+td]:border-l [&_td]:pl-[3px] [&_td]:whitespace-nowrap">
          <colgroup><col class="w-[14px]"><col class="w-[14px]"><col class="w-[198px]"><col></colgroup>
          <tbody>
            <tr><th><button aria-label="Collapse KML Settings" class="block ml-[5px]"><svg width="7" height="7"><path d="M7 0v7H0Z" fill="#303030"/></svg></button></th><th colspan="3" class="pl-[3px]!">KML Settings</th></tr>
            <tr><th></th><td colspan="2">Default UTM Zone</td><td>Zone-46</td></tr>
            <tr><th></th><td colspan="2">Default Hemisphere</td><td>North</td></tr>
            <tr><th></th><td colspan="2">Export Entities</td><td>Visible Layers</td></tr>
            <tr><th></th><th class="border-t border-[#b4c8e8]"><button aria-label="Expand Point Export" class="block ml-[5px]"><svg width="5" height="8"><path d="M.5.5L4 4 .5 7.500Z" fill="#f0f4fc" stroke="#b8c8e4"/></svg></button></th><th colspan="2" class="border-t border-[#b4c8e8]"><span class="block w-fit ml-px px-[2px] leading-[13px] outline-1 outline-dotted outline-[#303030]">Point Export</span></th></tr>
            <tr><th></th><th></th><td>Export Point</td><td>False</td></tr>
            <tr><th></th><th></th><td>Point Style</td><td>blue-pushpin.png</td></tr>
            <tr><th></th><th></th><td>Icon Scale</td><td>1.2</td></tr>
            <tr><th></th><th></th><td>Icon Color</td><td><span class="flex items-center gap-[6px]"><i class="w-5 h-[14px] ml-[-2px] bg-white border border-[#555]"></i>255; 255; 255</span></td></tr>
            <tr><th></th><th></th><td>Icon Opacity</td><td>100</td></tr>
            <tr><th></th><th class="border-t border-[#b4c8e8]"><button aria-label="Collapse Line Export" class="block ml-[5px]"><svg width="7" height="7"><path d="M7 0v7H0Z" fill="#303030"/></svg></button></th><th colspan="2" class="border-t border-[#b4c8e8] pl-[3px]!">Line Export</th></tr>
            <tr><th></th><th></th><td>Export Lines</td><td>True</td></tr>
            <tr><th></th><th></th><td>Width</td><td>1</td></tr>
            <tr><th></th><th></th><td>Color</td><td><span class="flex items-center gap-[6px]"><i class="w-5 h-[14px] ml-[-2px] bg-[#00ffff] border border-[#555]"></i>0; 255; 255</span></td></tr>
            <tr><th></th><th></th><td>Opacity</td><td>100</td></tr>
            <tr><th></th><th class="border-y border-[#b4c8e8]"><button aria-label="Expand Polygons" class="block ml-[5px]"><svg width="5" height="8"><path d="M.5.5L4 4 .5 7.500Z" fill="#f0f4fc" stroke="#b8c8e4"/></svg></button></th><th colspan="2" class="border-y border-[#b4c8e8] pl-[3px]!">Polygons/Closed Polylines</th></tr>
          </tbody>
        </table>
        <div class="w-[17px] shrink-0 flex flex-col bg-[#f0f0f0]">
          <button aria-label="Scroll up" class="h-[17px] bg-white border border-[#aaa] grid place-items-center"><svg width="9" height="5"><path d="M0 5L4.500 0 9 5Z" fill="#606060"/></svg></button>
          <div class="h-[215px] mt-px bg-white border border-[#aaa]"></div>
          <button aria-label="Scroll down" class="mt-auto h-[17px] bg-white border border-[#aaa] grid place-items-center"><svg width="9" height="5"><path d="M0 0h9L4.500 5Z" fill="#606060"/></svg></button>
        </div>
      </div>
      <div class="h-[63px] shrink-0 bg-white border border-t-2 border-t-[#eef2f9] border-[#8fa6cf] px-[5px] pt-[5px] text-[#404040] font-bold font-['Noto_Sans']">Point Export</div>
    </section>
  </main>

  <div class="h-[9px] shrink-0 grid place-items-center border-b border-[#888]"><div class="w-[14px] h-[2px] border-y border-dotted border-[#bbb]"></div></div>

  <!-- command log -->
  <div class="flex h-[74px] shrink-0 ml-px bg-white border-b border-[#aaa]">
    <textarea aria-label="Command history" readonly class="flex-1 resize-none outline-0 text-black"></textarea>
    <div class="w-4 bg-[#f0f0f0] flex flex-col items-center justify-between py-[6px]">
      <svg width="9" height="6"><path d="M0 6L4.500 0 9 6Z" fill="#a0a0a0"/></svg>
      <svg width="9" height="6"><path d="M0 0h9L4.500 6Z" fill="#a0a0a0"/></svg>
    </div>
  </div>
  <div class="flex items-center h-[15px] shrink-0 ml-px pl-px bg-white text-[#282838]">
    <label for="cmd">Command:</label><input id="cmd" class="flex-1 outline-0 ml-1">
  </div>

  <footer class="flex items-center justify-between h-7 shrink-0 bg-[#4f4f4f] border-t border-[#777] pl-[19px] pr-2">
    <span>Ready</span><span class="border-l border-[#454545] pl-[10px]">784361.95,1435829.807</span>
  </footer>
</div>

<script>
  // text runs: x, y, length, colour
  const W = '#ffffff', Y = '#ffd890', G = '#b8f8d0';
  const labels = [
    [350, 104, 55, G], [390, 91, 60, G], [403, 153, 60, G], [520, 90, 34, W], [556, 58, 45, Y], [580, 82, 55, Y],
    [690, 130, 50, W], [585, 115, 60, Y], [600, 160, 60, Y], [580, 178, 60, Y], [570, 220, 55, Y], [610, 248, 50, Y],
    [480, 325, 60, Y], [490, 338, 70, Y], [510, 348, 80, Y], [520, 356, 80, Y], [545, 366, 80, Y], [560, 378, 75, Y], [570, 386, 60, Y],
    [402, 405, 88, Y], [470, 405, 45, Y], [540, 432, 75, Y], [550, 450, 70, Y], [575, 468, 45, Y], [640, 408, 50, Y],
    [540, 525, 60, W], [560, 518, 40, W], [370, 334, 38, W], [410, 530, 80, G], [372, 547, 40, G], [480, 545, 55, G],
    [430, 567, 55, W], [480, 588, 125, G], [490, 592, 110, G], [582, 572, 30, W], [640, 470, 40, W], [660, 522, 45, Y],
    [680, 270, 50, Y], [690, 295, 50, Y], [680, 310, 45, Y], [675, 325, 55, Y], [670, 340, 60, Y], [680, 352, 45, Y], [680, 346, 50, Y], [675, 334, 50, Y], [665, 368, 60, Y], [665, 408, 40, Y],
    [725, 90, 55, G], [730, 132, 50, G], [720, 142, 50, G], [715, 178, 70, G], [710, 200, 55, G], [720, 215, 50, G], [715, 230, 60, G], [725, 222, 40, G], [728, 138, 40, G],
    [795, 156, 80, G], [920, 175, 90, G], [925, 184, 80, G], [930, 168, 90, G], [930, 179, 80, G], [925, 205, 50, G], [880, 250, 40, G], [930, 240, 60, G],
    [1005, 98, 50, G], [1055, 117, 45, G], [1060, 145, 40, G], [1030, 247, 45, G], [1190, 155, 40, G],
    [800, 325, 60, Y], [810, 335, 70, Y], [820, 345, 60, Y], [770, 318, 60, Y], [1035, 280, 50, W], [1045, 268, 40, W], [1085, 258, 30, W],
    [830, 345, 50, Y], [730, 400, 55, W], [905, 372, 40, G], [910, 380, 30, W], [820, 438, 40, G], [740, 475, 30, G], [955, 465, 50, G],
    [1428, 148, 22, W], [1205, 128, 40, Y], [1250, 200, 25, W], [900, 562, 85, W], [760, 545, 40, G], [1235, 357, 30, G], [1155, 517, 30, W],
    [1155, 590, 90, G], [1185, 594, 60, G], [1230, 694, 65, Y], [1155, 680, 40, G], [1340, 817, 40, W], [1128, 841, 38, W], [835, 676, 45, G], [780, 703, 60, G],
    [20, 826, 46, W], [328, 764, 42, W], [300, 642, 24, W], [580, 622, 45, W], [560, 700, 35, W], [565, 712, 25, W], [690, 612, 60, W],
    [650, 605, 50, Y], [640, 655, 50, Y], [650, 645, 40, Y], [635, 685, 60, Y], [630, 693, 50, Y], [345, 656, 45, Y], [330, 672, 55, Y], [400, 628, 45, Y], [440, 624, 55, Y],
    [655, 628, 40, Y], [750, 578, 40, G], [-392, 1125, 10, W], [-392, 1129, 10, W]
  ];
  // each run is a thin line with a short thicker start, like tiny lettering
  document.getElementById('labels').innerHTML = labels.map(l =>
    `<path d="M${l[0]} ${l[1]}h${l[2]}M${l[0] + 3} ${l[1] - 3}h${Math.round(l[2] / 3)}" stroke="${l[3]}"/>`).join('');

  const marks = [
    [190, 15], [198, 15], [265, 20], [283, 35], [460, 76], [490, 74], [527, 250], [52, 286], [305, 260], [197, 432], [248, 523], [385, 370], [358, 452],
    [340, 478], [370, 422], [402, 400], [600, 105], [615, 108], [660, 118], [590, 520], [600, 535], [605, 545], [585, 545], [620, 500], [650, 510], [738, 15], [757, 38],
    [795, 22], [800, 28], [974, 80], [983, 115], [1085, 105], [1078, 172], [955, 208], [983, 235], [985, 265], [990, 280], [985, 295], [995, 318], [930, 345], [882, 372],
    [1128, 240], [1130, 250], [1200, 278], [1206, 278], [1178, 295], [1223, 165], [1235, 150], [1255, 132], [1280, 310], [1150, 500], [1170, 485], [1157, 560], [1155, 605],
    [1118, 708], [1412, 863], [1205, 755], [795, 550], [800, 562], [810, 552], [448, 954], [508, 1089], [520, 1083], [-357, 1104], [497, 1068],
    [285, 655], [290, 668], [300, 655], [280, 665], [375, 790], [385, 812], [550, 795], [400, 600], [480, 587], [620, 655], [640, 440], [632, 425], [655, 400], [670, 295]
  ];
  document.getElementById('marks').innerHTML = marks.map(m =>
    `<path d="M${m[0] - 5} ${m[1] - 5}l10 10m0-10l-10 10"/>`).join('');
</script>
</body>
</html>
